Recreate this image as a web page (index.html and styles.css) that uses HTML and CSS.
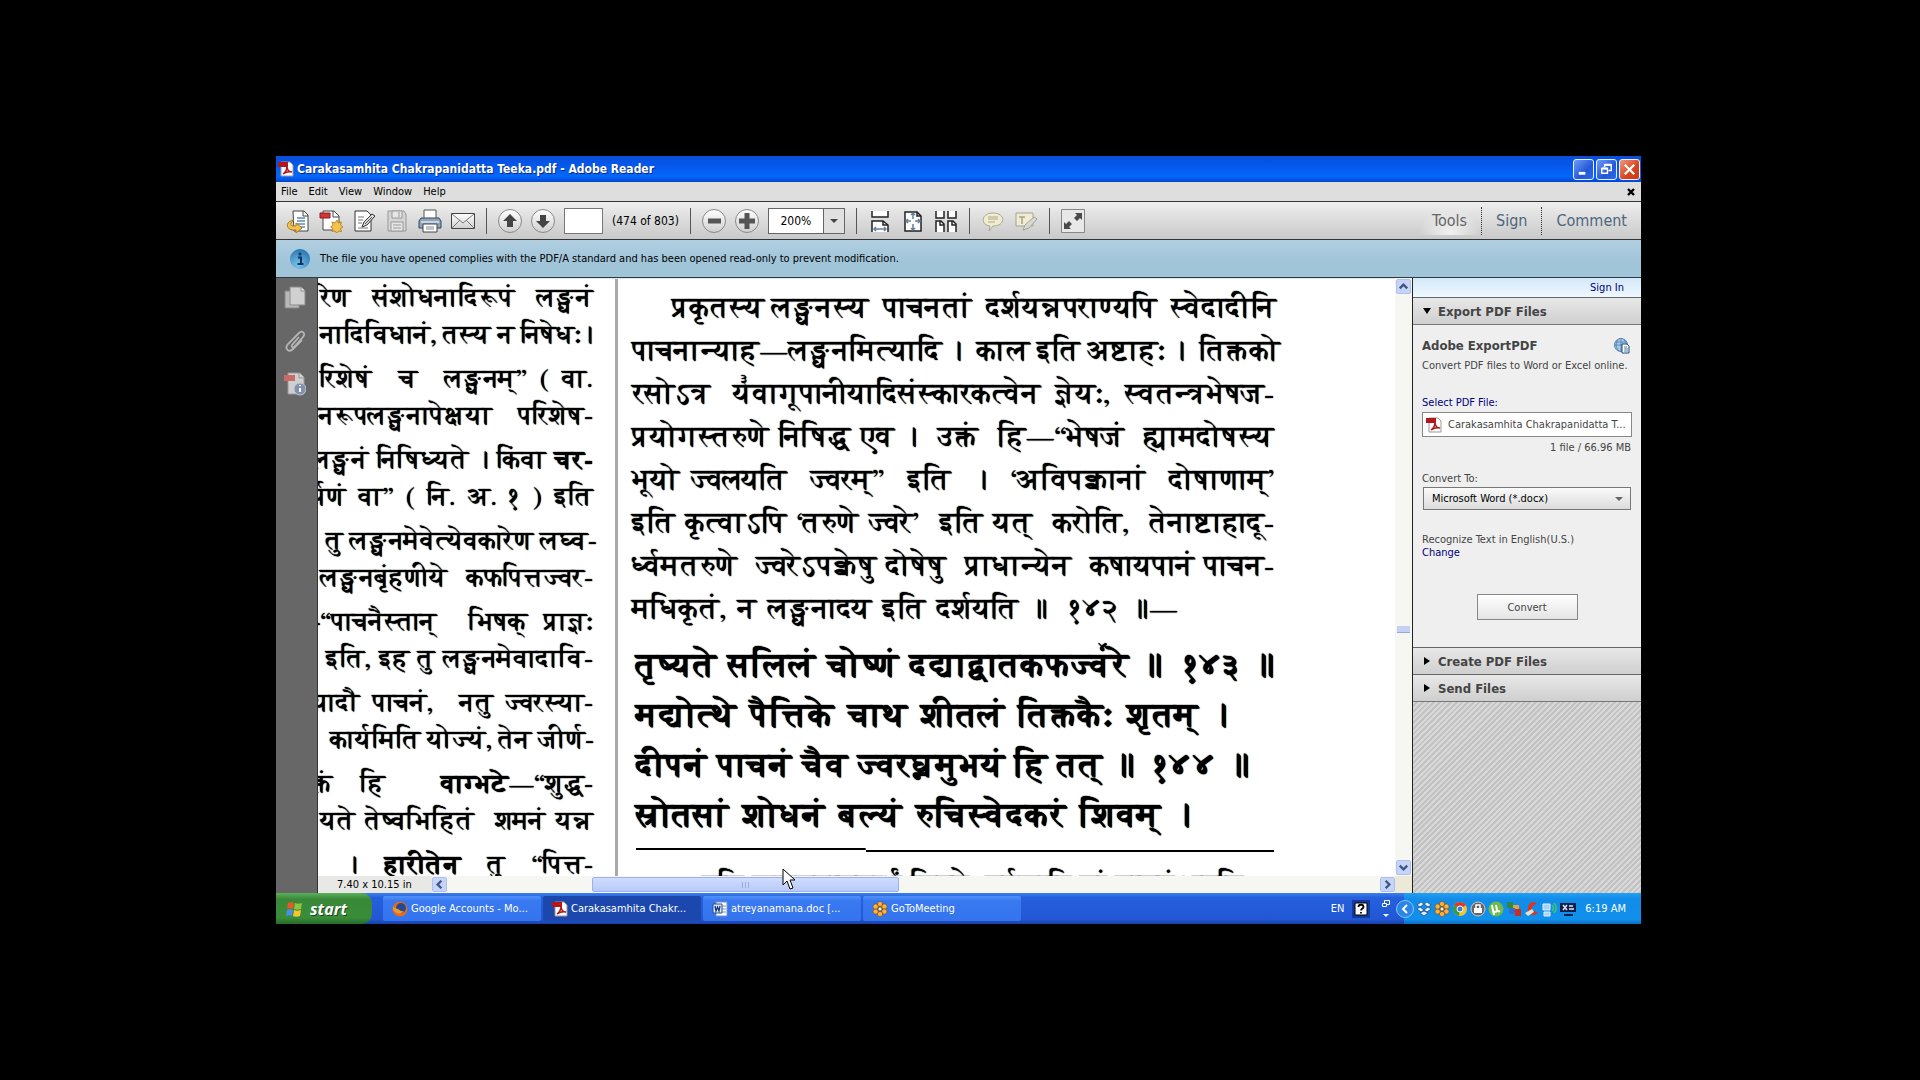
FILE: index.html
```html
<!DOCTYPE html>
<html lang="en">
<head>
<meta charset="utf-8">
<title>Carakasamhita Chakrapanidatta Teeka.pdf - Adobe Reader</title>
<link rel="stylesheet" href="styles.css">
</head>
<body>
<svg class="defs" aria-hidden="true">
  <linearGradient id="steel" x1="0" y1="0" x2="0" y2="1"><stop offset="0" stop-color="#fff"/><stop offset="1" stop-color="#cfcfcf"/></linearGradient>
  <radialGradient id="info" cx=".4" cy=".8" r=".9"><stop offset="0" stop-color="#7cc4ea"/><stop offset="1" stop-color="#1f6cab"/></radialGradient>
  <symbol id="pdf" viewBox="0 0 16 16"><path d="M3 1h9l3 3v11H3z" fill="#fff" stroke="#999"/><path d="M0 1h10v5H0z" fill="#b3161b"/><path d="M5 13c3-2 4-5 4-8 0 4 2 6 5 6-4-1-6 0-9 2z" fill="none" stroke="#b3161b" stroke-width="1.5"/></symbol>
  <symbol id="flower" viewBox="0 0 16 16"><g fill="#fbb040" stroke="#6b3a08" stroke-width=".5"><circle cx="8" cy="3" r="2.600"/><circle cx="12.4" cy="5.5" r="2.600"/><circle cx="12.4" cy="10.5" r="2.600"/><circle cx="8" cy="13" r="2.600"/><circle cx="3.6" cy="10.5" r="2.600"/><circle cx="3.6" cy="5.5" r="2.600"/></g><circle cx="8" cy="8" r="2" fill="#fff2c8" stroke="#6b3a08" stroke-width=".7"/></symbol>
</svg>
<div class="window">
  <header class="titlebar">
    <svg class="i16"><use href="#pdf"/></svg>
    <h1>Carakasamhita Chakrapanidatta Teeka.pdf - Adobe Reader</h1>
    <div class="winbtns">
      <button aria-label="Minimize"><svg viewBox="0 0 20 20"><path d="M5 14h7" stroke="#fff" stroke-width="3"/></svg></button>
      <button aria-label="Restore"><svg viewBox="0 0 20 20" fill="none" stroke="#fff"><path d="M8 8V5h7v6h-3" stroke-width="1.5"/><path d="M5 9h6v5H5z" stroke-width="1.5"/><path d="M5 9h6M8 5h7" stroke-width="2"/></svg></button>
      <button class="close" aria-label="Close"><svg viewBox="0 0 20 20"><path d="M5 5l10 10M15 5L5 15" stroke="#fff" stroke-width="2.4"/></svg></button>
    </div>
  </header>
  <nav class="menubar">
    <button>File</button><button>Edit</button><button>View</button><button>Window</button><button>Help</button>
    <button class="docclose" aria-label="Close document"><svg viewBox="0 0 8 8"><path d="M1 1l6 6M7 1L1 7" stroke="#000" stroke-width="2.4"/></svg></button>
  </nav>
  <div class="toolbar">
    <div class="group">
      <button aria-label="Open"><svg viewBox="0 0 24 24"><path d="M7 2h11l4 4v16H8z" fill="#fff" stroke="#444"/><path d="M17 2v5h5" fill="none" stroke="#444"/><path d="M11 9h8M11 12h8M11 15h8M13 18h6" stroke="#5b8db5" stroke-width="1.3"/><path d="M8 11C0 12-1 19 6 21h4v3l6-5-6-5v3H7c-3 0-3-3 1-6z" fill="#f4c34d" stroke="#a9781a"/></svg></button>
      <button aria-label="Create PDF"><svg viewBox="0 0 24 24"><path d="M4 2h11l5 5v14H4z" fill="#fff" stroke="#444"/><path d="M14 2v6h6" fill="none" stroke="#444"/><path d="M1 4h10v5H1z" fill="#d8323a" stroke="#8c1c22"/><path d="M18 11l1.500 3 3-1-1 3 2.500 2-2.500 1.500 1 3-3-.5-1.500 2.500-2-2.500-3 .5 1-3-2.500-1.500 2.500-2-1-3 3 1z" fill="#f4c34d" stroke="#a9781a" stroke-width=".8"/></svg></button>
      <button aria-label="Edit"><svg viewBox="0 0 24 24"><path d="M3 2h12l4 4v16H3z" fill="#fff" stroke="#333"/><path d="M6 8h6M6 11h5M6 14h4M6 19h10" stroke="#777"/><path d="M10 18l2-5 8-8 3 2-8 9z" fill="#d9dde2" stroke="#333"/><path d="M13 15l7-7" stroke="#555"/></svg></button>
      <button aria-label="Save" disabled><svg viewBox="0 0 24 24" fill="#d4d4d4" stroke="#999"><path d="M3 2h16l2 3v17H3z"/><path d="M7 2h10v7H7zM6 13h12v9H6z" fill="#e6e6e6"/><path d="M14 3v5M8 16h8M8 19h8" fill="none"/></svg></button>
      <button aria-label="Print"><svg viewBox="0 0 24 24"><path d="M6 1h12v9H6z" fill="#fff" stroke="#555"/><path d="M3 9h18l2 3v7H1v-7z" fill="#90a4bb" stroke="#34465a"/><path d="M3 13h18" stroke="#dbe5ef" stroke-width="1.500"/><path d="M5 15h14v8H5z" fill="#fff" stroke="#444"/><path d="M8 18h8M8 20h8" stroke="#888"/></svg></button>
      <button aria-label="Email"><svg viewBox="0 0 24 24"><path d="M0.500 4.500h23v15H.5z" fill="url(#steel)" stroke="#444"/><path d="M1 5l11 9L23 5M1 19l8-8M23 19l-8-8" fill="none" stroke="#777"/></svg></button>
    </div>
    <div class="group">
      <button aria-label="Previous page"><svg viewBox="0 0 24 24"><circle cx="12" cy="12" r="11.500" fill="url(#steel)" stroke="#888"/><path d="M12 5l7 7h-4v6H9v-6H5z" fill="#444"/></svg></button>
      <button aria-label="Next page"><svg viewBox="0 0 24 24"><circle cx="12" cy="12" r="11.500" fill="url(#steel)" stroke="#888"/><path d="M12 19l7-7h-4V6H9v6H5z" fill="#444"/></svg></button>
      <input class="pageno" aria-label="Page number">
      <span class="pages">(474 of 803)</span>
    </div>
    <div class="group">
      <button aria-label="Zoom out"><svg viewBox="0 0 24 24"><circle cx="12" cy="12" r="11.500" fill="url(#steel)" stroke="#888"/><path d="M6 12h13" stroke="#555" stroke-width="5"/></svg></button>
      <button aria-label="Zoom in"><svg viewBox="0 0 24 24"><circle cx="12" cy="12" r="11.500" fill="url(#steel)" stroke="#888"/><path d="M4 12h16M12 4v16" stroke="#555" stroke-width="5"/></svg></button>
      <div class="zoom"><input value="200%" aria-label="Zoom level"><button aria-label="Zoom presets"><svg viewBox="0 0 8 8"><path d="M0 2h8L4 6z" fill="#444"/></svg></button></div>
    </div>
    <div class="group">
      <button aria-label="Fit width"><svg viewBox="0 0 24 24" fill="none" stroke="#222" stroke-width="1.500"><path d="M4 2v6h16V2" fill="#fff"/><path d="M4 23V12h11l5 4v7" fill="#fff"/><path d="M15 12v4h5"/><path d="M6 20h12M8 18l-2 2 2 2M16 18l2 2-2 2" stroke="#66809c"/></svg></button>
      <button aria-label="Fit page"><svg viewBox="0 0 24 24" fill="none" stroke="#222" stroke-width="1.500"><path d="M4 3h12l4 4v15H4z" fill="#fff"/><path d="M16 3v4h4"/><path d="M12 4v6M12 15v6M5 12h5M14 12h5M10 6l2-2 2 2M10 19l2 2 2-2M7 10l-2 2 2 2M17 10l2 2-2 2" stroke="#66809c"/></svg></button>
      <button aria-label="Two pages"><svg viewBox="0 0 24 24" fill="none" stroke="#222" stroke-width="1.500"><path d="M2 2v7h8V2M14 2v7h8V2" fill="#fff"/><path d="M2 23V12h5l3 3v8M14 23V12h5l3 3v8" fill="#fff"/><path d="M6 12v4h4M18 12v4h4"/></svg></button>
    </div>
    <div class="group">
      <button aria-label="Comment" disabled><svg viewBox="0 0 24 24" fill="#efecd2" stroke="#aba98c"><path d="M12 4c13 0 13 13 0 13l-4 5 1-5C-1 16 0 4 12 4z"/><path d="M7 8h10M7 10h10M7 13h7"/></svg></button>
      <button aria-label="Highlight" disabled><svg viewBox="0 0 24 24" fill="#efecd2" stroke="#a5a490"><path d="M2 4h17v13H2z"/><path d="M5 8h6M8 8v7" stroke-width="1.500"/><path d="M9 21l2-5 9-8 3 2-8 9z" fill="#d8d8d4"/></svg></button>
    </div>
    <div class="group">
      <button aria-label="Read mode"><svg viewBox="0 0 24 24"><path d="M.5.5h23v23H.5z" fill="#e8e8e8" stroke="#888"/><path d="M14 4h7v7l-2-2-3 3-3-3 3-3zM3 20v-7l2 2 3-3 3 3-3 3 2 2z" fill="#4a4a4a"/></svg></button>
    </div>
    <div class="tasks"><button class="on">Tools</button><button>Sign</button><button>Comment</button></div>
  </div>
  <div class="notice">
    <svg viewBox="0 0 20 20"><circle cx="10" cy="10" r="10" fill="url(#info)"/><path d="M8 8.500h3V15M7.500 15h6" stroke="#0d3761" stroke-width="2" fill="none"/><circle cx="10" cy="5" r="1.600" fill="#0d3761"/></svg>
    <span>The file you have opened complies with the PDF/A standard and has been opened read-only to prevent modification.</span>
  </div>
  <main>
    <nav class="strip">
      <button aria-label="Thumbnails"><svg viewBox="0 0 22 24"><path d="M1 5h14v17H1z" fill="#b9b9b9" stroke="#888"/><path d="M6 1h11l4 4v14H6z" fill="#d0d0d0" stroke="#8a8a8a"/><path d="M17 1v4h4" fill="#eee" stroke="#8a8a8a"/></svg></button>
      <button aria-label="Attachments"><svg viewBox="0 0 22 24" fill="none" stroke="#b5b5b5" stroke-width="1.800"><path d="M15 8L8 16c-1 2 1 3 2 2l9-10c3-4-1-7-4-4L4 15c-4 5 1 9 5 5l9-9"/></svg></button>
      <button aria-label="Standards"><svg viewBox="0 0 22 24"><path d="M4 1h12l4 4v17H4z" fill="#cfcfcf" stroke="#999"/><path d="M15 1v5h5" fill="none" stroke="#999"/><path d="M0 3h11v6H0z" fill="#c96a6a"/><circle cx="16" cy="17" r="6" fill="#8490b0" stroke="#c4c8d4"/><path d="M16 16v4M16 13v1" stroke="#fff" stroke-width="2"/></svg></button>
    </nav>
    <section class="doc">
      <div class="pages-view" lang="sa">
        <article class="page left">
          <p>रेण&nbsp; संशोधनादिरूपं&nbsp; लङ्घनं</p>
          <p>नादिविधानं, तस्य न निषेधः।</p>
          <p>रिशेषं&nbsp; च&nbsp; लङ्घनम्’’ ( वा.</p>
          <p class="cut2">मानरूपलङ्घनापेक्षया&nbsp; परिशेष-</p>
          <p class="cut">लङ्घनं निषिध्यते । किंवा <b>चर-</b></p>
          <p class="cut">र्पणं वा’’ ( नि. अ. १ ) इति</p>
          <p class="in">तु लङ्घनमेवेत्येवकारेण लघ्व-</p>
          <p>लङ्घनबृंहणीये&nbsp; कफपित्तज्वर-</p>
          <p class="cut">-‘‘पाचनैस्तान्&nbsp; भिषक् प्राज्ञः</p>
          <p class="in">इति, इह तु लङ्घनमेवादावि-</p>
          <p class="cut">यादौ पाचनं,&nbsp; नतु ज्वरस्या-</p>
          <p class="in2">कार्यमिति योज्यं, तेन जीर्ण-</p>
          <p class="cut">क्तं हि&nbsp; <b>वाग्भटे</b>—‘‘शुद्ध-</p>
          <p>यते तेष्वभिहितं&nbsp; शमनं यन्न</p>
          <p class="in3">।&nbsp; <b>हारीतेन</b>&nbsp; तु&nbsp; ‘‘पित्त-</p>
        </article>
        <article class="page right">
          <p class="ind">प्रकृतस्य लङ्घनस्य&nbsp; पाचनतां&nbsp; दर्शयन्नपराण्यपि&nbsp; स्वेदादीनि</p>
          <p>पाचनान्याह—लङ्घनमित्यादि ।&nbsp; काल इति अष्टाहः ।&nbsp; तिक्तको</p>
          <p>रसोऽत्र&nbsp;&nbsp; <span class="noted">य<sup>३</sup></span>वागूपानीयादिसंस्कारकत्वेन&nbsp; ज्ञेयः,&nbsp; स्वतन्त्रभेषज-</p>
          <p>प्रयोगस्तरुणे निषिद्ध एव ।&nbsp; उक्तं&nbsp; हि—‘‘भेषजं&nbsp; ह्यामदोषस्य</p>
          <p>भूयो ज्वलयति&nbsp; ज्वरम्’’&nbsp; इति&nbsp; ।&nbsp; ‘अविपक्वानां&nbsp; दोषाणाम्’</p>
          <p>इति कृत्वाऽपि ‘तरुणे ज्वरे’&nbsp; इति यत्&nbsp; करोति,&nbsp; तेनाष्टाहादू-</p>
          <p>र्ध्वमतरुणे&nbsp; ज्वरेऽपक्वेषु दोषेषु&nbsp; प्राधान्येन&nbsp; कषायपानं पाचन-</p>
          <p class="end">मधिकृतं, न लङ्घनादय इति दर्शयति ॥&nbsp; १४२ ॥—</p>
          <div class="verse">
            <p>तृष्यते सलिलं चोष्णं दद्याद्वातकफज्<span class="noted">व<sup>४</sup></span>रे ॥&nbsp; १४३ ॥</p>
            <p class="v2">मद्योत्थे पैत्तिके चाथ शीतलं तिक्तकैः शृतम् ।</p>
            <p class="v3">दीपनं पाचनं चैव ज्वरघ्नमुभयं हि तत् ॥&nbsp; १४४ ॥</p>
            <p class="v4">स्रोतसां शोधनं बल्यं रुचिस्वेदकरं शिवम् ।</p>
          </div>
          <hr>
          <p class="next">इति लङ्घनपाचनार्थं विषये&nbsp; तर्पणादि नां पाचनं भवति</p>
        </article>
      </div>
      <div class="vscroll">
        <button aria-label="Scroll up"><svg viewBox="0 0 14 14"><path d="M3 9l4-4 4 4" fill="none" stroke="#3f5580" stroke-width="2.500"/></svg></button>
        <span class="vthumb"></span>
        <button aria-label="Scroll down"><svg viewBox="0 0 14 14"><path d="M3 5l4 4 4-4" fill="none" stroke="#3f5580" stroke-width="2.500"/></svg></button>
      </div>
      <div class="hscroll">
        <span class="size">7.40 x 10.15 in</span>
        <button aria-label="Scroll left"><svg viewBox="0 0 14 14"><path d="M9 3L5 7l4 4" fill="none" stroke="#3f5580" stroke-width="2.500"/></svg></button>
        <div class="track"><span class="hthumb"></span></div>
        <button aria-label="Scroll right"><svg viewBox="0 0 14 14"><path d="M5 3l4 4-4 4" fill="none" stroke="#3f5580" stroke-width="2.500"/></svg></button>
      </div>
      <div class="corner"></div>
      <svg class="cursor" viewBox="0 0 14 22"><path d="M1 1v16l4-4 3 8 3-1-3-8h5z" fill="#fff" stroke="#000"/></svg>
    </section>
    <aside class="panel">
      <div class="signin"><a href="#">Sign In</a></div>
      <h2><svg viewBox="0 0 8 8"><path d="M0 1h8L4 7z"/></svg>Export PDF Files</h2>
      <div class="export">
        <div class="prod"><h3>Adobe ExportPDF</h3><svg viewBox="0 0 16 16"><circle cx="7" cy="7" r="6.500" fill="#a9c9e6" stroke="#4c7fae"/><path d="M7 1v12M1 7h12M2 4h10M4 2c-3 4-2 8 1 11M10 2c3 3 3 6 2 8" fill="none" stroke="#4c7fae" stroke-width=".8"/><path d="M8 6h5l2 2v7H8z" fill="#fff" stroke="#234a72"/><path d="M10 9h3M10 11h4M10 13h4" stroke="#4c7fae"/></svg></div>
        <p class="blurb">Convert PDF files to Word or Excel online.</p>
        <p class="pick"><a href="#">Select PDF File:</a></p>
        <div class="file"><svg class="i16"><use href="#pdf"/></svg>Carakasamhita Chakrapanidatta T...</div>
        <p class="count">1 file / 66.96 MB</p>
        <label for="fmt">Convert To:</label>
        <div class="sel"><select id="fmt"><option>Microsoft Word (*.docx)</option></select><svg viewBox="0 0 8 8"><path d="M0 2h8L4 6z" fill="#666"/></svg></div>
        <p class="rec">Recognize Text in English(U.S.)</p>
        <p class="chg"><a href="#">Change</a></p>
        <button class="convert">Convert</button>
      </div>
      <h2><svg viewBox="0 0 8 8"><path d="M1 0v8l6-4z"/></svg>Create PDF Files</h2>
      <h2><svg viewBox="0 0 8 8"><path d="M1 0v8l6-4z"/></svg>Send Files</h2>
      <div class="hatch"></div>
    </aside>
  </main>
  <footer class="taskbar">
    <button class="start"><svg viewBox="0 0 18 18"><path d="M2 3c2-1 4-1 6 0L7 9C5 8 3 8 1 9z" fill="#e8562a"/><path d="M9 3c2 1 4 1 7 0l-1 6c-3 1-5 1-7 0z" fill="#8cc63f"/><path d="M1 10c2-1 4-1 6 0l-1 6c-2-1-4-1-6 0z" fill="#4a8fe8"/><path d="M8 10c2 1 4 1 7 0l-1 6c-3 1-5 1-7 0z" fill="#f9c52b"/></svg>start</button>
    <button class="task"><svg class="i16" viewBox="0 0 16 16"><circle cx="8" cy="8" r="7.500" fill="#e66a1e"/><circle cx="9" cy="7" r="5" fill="#264a8f"/><path d="M1 5c1 3 3 2 5 3s3 3 6 2c-3 4-9 3-11-2z" fill="#f39a2c"/></svg>Google Accounts - Mo...</button>
    <button class="task active"><svg class="i16"><use href="#pdf"/></svg>Carakasamhita Chakr...</button>
    <button class="task"><svg class="i16" viewBox="0 0 16 16"><path d="M4 1h11v14H4z" fill="#fff" stroke="#7d94c0"/><path d="M10 5h4M10 8h4M10 11h4" stroke="#7d94c0"/><path d="M1 3h9v9H1z" fill="#dfe8fa" stroke="#2b4f93"/><path d="M3 5l1 5 1.500-4L7 10l1-5" fill="none" stroke="#17367a" stroke-width="1.300"/></svg>atreyanamana.doc [...</button>
    <button class="task"><svg class="i16"><use href="#flower"/></svg>GoToMeeting</button>
    <div class="lang"><span>EN</span>
      <svg viewBox="0 0 18 18"><path d="M0 0h18v18H0z" fill="#123a9c"/><path d="M3 3h12v12H3z" fill="#fff" stroke="#000"/><path d="M6.500 7c0-3 5-3 5 0 0 1.500-2.500 1.500-2.500 3.500M9 12v1.500" fill="none" stroke="#000" stroke-width="1.800"/></svg>
      <svg class="mini" viewBox="0 0 8 18" fill="none" stroke="#fff"><path d="M2.500 3V.5h5v4H5M.5 3.500h4v3h-4z"/><path d="M1 14h6l-3 3z" fill="#fff" stroke="none"/></svg>
    </div>
    <div class="tray">
      <button class="chev" aria-label="Show icons"><svg viewBox="0 0 18 18"><circle cx="9" cy="9" r="8.500" fill="#2a86e8" stroke="#8cc4f8"/><path d="M11 5L7 9l4 4" fill="none" stroke="#fff" stroke-width="2"/></svg></button>
      <div class="icons">
      <svg viewBox="0 0 16 16"><path d="M5 1l3 2-4 3-3-2zM11 1l4 3-3 2-4-3zM1 8l3-2 4 3-3 2zM12 6l3 2-4 3-3-2zM4 12l4-2 4 2-4 3z" fill="#e4f2ff" stroke="#16407c" stroke-width=".7"/></svg>
      <svg><use href="#flower"/></svg>
      <svg viewBox="0 0 16 16"><circle cx="8" cy="8" r="7" fill="#f3c62f"/><path d="M8 8L2 4c3-4 9-4 12 0z" fill="#d93a2b"/><path d="M8 8L2 4c-3 5 0 10 5 11z" fill="#3a9b4a"/><circle cx="8" cy="8" r="3" fill="#3c79d8" stroke="#fff"/></svg>
      <svg viewBox="0 0 16 16"><circle cx="8" cy="8" r="7" fill="#666" stroke="#ccc"/><path d="M4 7h8v5H4z" fill="#fff"/><path d="M6 7V4h4v3" fill="none" stroke="#fff" stroke-width="1.500"/></svg>
      <svg viewBox="0 0 16 16"><circle cx="8" cy="8" r="7.500" fill="#6dbb4a"/><path d="M4 4l1 6c3 2 4 0 4-1l-1-5M9 9c1 2 3 1 3 1M5 9l1 5" fill="none" stroke="#fff" stroke-width="2"/></svg>
      <svg viewBox="0 0 16 16"><path d="M1 1h6v6H1z" fill="#2e8a3c"/><path d="M7 4h6v5H7z" fill="#e4a43a"/><path d="M3 7h6v6H3z" fill="#2f6fd0"/><path d="M9 8h6v7H9z" fill="#c53022"/></svg>
      <svg viewBox="0 0 16 16"><path d="M13 2C7-1 3 4 4 9s6 7 10 3l-3-2c-3 2-4-3-2-5z" fill="#d5352a"/><path d="M1 12l7-4 2 3-6 4z" fill="#e8e1c8"/></svg>
      <svg viewBox="0 0 16 16"><path d="M1 3h7v6H1zM2 11h6v4H2z" fill="#a5d0ff" stroke="#e6f2ff"/><path d="M10 4c2 2 2 4 0 6M12 2c3 3 3 7 0 10" fill="none" stroke="#42c96a" stroke-width="1.500"/></svg>
      <svg viewBox="0 0 16 16"><path d="M0 2h16v9H0zM4 13h9v2H4z" fill="#10204a"/><path d="M3 4l4 5M7 4L3 9M9 5h4M9 8h5" stroke="#dfe6f4" stroke-width="1.500"/></svg>
      </div>
      <time>6:19 AM</time>
    </div>
  </footer>
</div>
</body>
</html>
```
FILE: styles.css
```css
* { box-sizing: border-box; }
html, body { height: 100%; }
body {
  margin: 0; background: #000; color: #000; display: flex; flex-direction: column;
  padding: 156px 279px 156px 276px;
  font: 11px "DejaVu Sans Condensed", "DejaVu Sans", sans-serif;
}
h1, h2, h3, p { margin: 0; }
button { border: 0; padding: 0; background: none; font: inherit; color: inherit; }
input, select { font: inherit; }
a { color: #000080; text-decoration: none; }
svg { display: block; flex: none; }
.defs { position: absolute; width: 0; height: 0; }
.i16 { width: 16px; height: 16px; }
.window { flex: 1; min-height: 0; display: flex; flex-direction: column; background: #dedede; }

.titlebar { display: flex; align-items: center; gap: 3px; flex: none; height: 26px; padding: 0 1px 0 2px; background: linear-gradient(#0a4fd8, #0456e8 30%, #0468fc 80%, #0444cc); }
.titlebar h1 { flex: 1; font-size: 12px; color: #fff; text-shadow: 1px 1px #0a2a80; }
.winbtns { display: flex; gap: 2px; }
.winbtns button { width: 21px; height: 21px; border: 1px solid #e8f0ff; border-radius: 3px; background: linear-gradient(135deg, #6f9cf4, #2358d8 60%, #2a6ae8); }
.winbtns .close { background: linear-gradient(135deg, #f0987c, #d8431c 60%, #c83a14); }
.winbtns svg { width: 19px; height: 19px; }

.menubar { display: flex; align-items: center; gap: 11px; flex: none; height: 20px; padding: 0 6px 0 5px; border-bottom: 1px solid #333; }
.docclose { margin-left: auto; }
.docclose svg { width: 8px; height: 8px; }

.toolbar { display: flex; align-items: center; flex: none; height: 38px; padding-left: 10px; border-bottom: 1px solid #333; background: linear-gradient(#eee, #c9c9c9); }
.group { display: flex; align-items: center; gap: 9px; padding-right: 11px; margin-right: 11px; border-right: 1px solid #555; height: 26px; }
.group > button > svg { width: 24px; height: 24px; }
.group:nth-child(6) { border: 0; }
.pageno { width: 39px; height: 26px; border: 1px solid #777; background: #fff; }
.pages { font-size: 12px; }
.zoom { display: flex; height: 26px; width: 77px; border: 1px solid #666; background: #fff; }
.zoom input { width: 54px; border: 0; padding: 0; text-align: center; font-size: 12px; background: none; }
.zoom button { flex: 1; border-left: 1px solid #666; background: #e0e0e0; display: flex; align-items: center; justify-content: center; }
.zoom svg { width: 8px; height: 8px; }
.tasks { margin-left: auto; display: flex; font-size: 16px; color: #4f6580; }
.tasks button { padding: 0 14px; height: 28px; }
.tasks button + button { border-left: 1px dotted #333; }
.tasks .on { color: #666; background: radial-gradient(ellipse at bottom, #f2f2f2, transparent 70%); }

.notice { display: flex; align-items: center; gap: 10px; flex: none; height: 38px; padding-left: 14px; border-bottom: 1px solid #2c3a44; background: linear-gradient(#b2cfe2, #a0c4d8 60%); }
.notice svg { width: 20px; height: 20px; }

main { flex: 1; display: flex; min-height: 0; }
.strip { width: 42px; flex: none; background: #676767; border-right: 1px solid #333; display: flex; flex-direction: column; gap: 19px; padding: 8px 8px; }
.strip svg { width: 22px; height: 24px; }

.doc { flex: 1; min-width: 0; display: grid; grid-template: minmax(0, 1fr) 17px / minmax(0, 1fr) 17px; position: relative; background: #fff; }
.pages-view { display: flex; overflow: hidden; min-height: 0; border-top: 1px solid #e4e4e4; font-family: FreeSerif, "Noto Sans", serif; text-shadow: 0 0 1px #000, 0 0 1px #000; white-space: nowrap; }
.page p { text-align-last: justify; }
.left { flex: none; width: 300px; padding: 1px 22px 0 2px; font-size: 26px; overflow: hidden; border-right: 3px solid #aaa; }
.left p { line-height: 37px; height: 37px; }
.left p:nth-child(even) { margin-bottom: 7px; }
.left .cut { margin-left: -8px; }
.left .cut2 { margin-left: -24px; }
.left .in { margin-left: 6px; }
.left .in2 { margin-left: 10px; }
.left .in3 { margin-left: 26px; }
.right { width: 656px; flex: none; padding: 8px 0 0 14px; font-size: 29px; }
.right p { line-height: 43px; height: 43px; }
.right .ind { margin-left: 40px; }
.right .end { margin-right: 96px; }
.noted { position: relative; }
.noted sup { position: absolute; top: -8px; left: 8px; font-size: 14px; line-height: 14px; }
.verse { font-size: 34px; font-weight: bold; padding: 10px 0 0 4px; }
.right .verse p { line-height: 50px; height: 50px; }
.right .verse .v2 { margin-right: 47px; }
.right .verse .v3 { margin-right: 25px; }
.right .verse .v4 { margin-right: 84px; }
.right hr { height: 4px; margin: 7px 0 12px 4px; border: 0; background: linear-gradient(#000, #000) left top / 36% 2px no-repeat, linear-gradient(#000, #000) right bottom / 64% 2px no-repeat; }
.right .next { margin: 0 40px 0 70px; }

.vscroll { display: flex; flex-direction: column; align-items: center; justify-content: space-between; padding: 1px; background: #f6f6f2; }
.vscroll button, .hscroll button { width: 15px; height: 15px; border-radius: 2px; background: #c6d4fa; border: 1px solid #b0c0ec; flex: none; }
.vscroll svg, .hscroll svg { width: 13px; height: 13px; }
.vthumb { width: 13px; height: 7px; background: #c6d0f4; border-bottom: 1px solid #9aa8d8; margin-top: 105px; }
.hscroll { display: flex; align-items: center; background: #f6f6f2; }
.size { width: 114px; height: 17px; padding-left: 19px; line-height: 17px; background: #e8e8e6; }
.track { flex: 1; height: 17px; padding: 1px 0; }
.hthumb { display: block; height: 15px; width: 33%; margin-left: 15.5%; border-radius: 2px; border: 1px solid #9cb2ec; background: repeating-linear-gradient(90deg, #98aee4 0 1px, transparent 1px 3px) center / 7px 6px no-repeat, linear-gradient(#d0dcff, #b8caf8); }
.corner { background: #ece9d8; }
.cursor { position: absolute; left: 464px; top: 590px; width: 14px; height: 22px; }

.panel { width: 229px; flex: none; display: flex; flex-direction: column; border-left: 1px solid #222; background: #efefef; color: #444; }
.signin { height: 19px; line-height: 19px; padding-right: 17px; text-align: right; background: linear-gradient(#d4e8f8, #eef8ff); }
.panel h2 { display: flex; align-items: center; gap: 7px; height: 27px; padding-left: 10px; font-size: 13px; border-top: 1px solid #666; background: linear-gradient(#e8e8e8, #cfcfcf); }
.panel h2 svg { width: 8px; height: 8px; }
.export { padding: 13px 9px 0; height: 323px; border-top: 1px solid #777; }
.prod { display: flex; justify-content: space-between; height: 16px; padding-right: 2px; }
.prod h3 { font-size: 13px; line-height: 16px; }
.prod svg { width: 16px; height: 16px; }
.blurb { margin-top: 2px; line-height: 20px; white-space: nowrap; }
.pick { margin-top: 18px; line-height: 18px; }
.file { display: flex; align-items: center; gap: 6px; height: 25px; padding-left: 3px; border: 1px solid #888; background: #fff; white-space: nowrap; overflow: hidden; }
.count { text-align: right; line-height: 22px; padding-right: 1px; }
.export label { display: block; margin-top: 11px; line-height: 17px; }
.sel { position: relative; margin: 0 1px; }
.sel select { appearance: none; width: 100%; height: 23px; padding: 0 8px; border: 1px solid #777; border-radius: 0; color: #000; background: linear-gradient(#fafafa, #dcdcdc); }
.sel svg { position: absolute; right: 8px; top: 8px; width: 8px; height: 8px; }
.rec { margin-top: 23px; line-height: 14px; }
.chg { line-height: 12px; }
.convert { display: block; width: 101px; height: 26px; margin: 35px auto 0; border: 1px solid #888; background: linear-gradient(#fff, #e4e4e4); }
.hatch { flex: 1; border-top: 1px solid #777; background: repeating-linear-gradient(135deg, #d8d8d8 0 2px, #c2c2c2 2px 4px); }

.taskbar { display: flex; align-items: center; flex: none; height: 31px; color: #fff; background: linear-gradient(#3a80f0, #2560dc 15%, #2257d4 85%, #1840a8); }
.start { display: flex; align-items: center; gap: 6px; width: 96px; height: 100%; margin-right: 11px; padding-left: 10px; border-radius: 0 10px 10px 0; background: linear-gradient(#5cb05c, #388838 20%, #3a8c3a 80%, #256a28); font: italic bold 16px "Open Sans", sans-serif; text-shadow: 1px 1px #1c4c1c; }
.start svg { width: 18px; height: 18px; }
.task { display: flex; align-items: center; gap: 3px; width: 158px; height: 25px; margin-right: 2px; padding-left: 9px; border-radius: 2px; white-space: nowrap; background: linear-gradient(#5090fc, #3878f0 20%, #3474ec); }
.task.active { background: #1c48ae; }
.lang { margin-left: auto; display: flex; align-items: center; gap: 8px; }
.lang svg { width: 18px; height: 18px; }
.lang .mini { width: 8px; margin: 0 14px 0 4px; }
.tray { display: flex; align-items: center; height: 100%; padding-right: 15px; background: linear-gradient(#20a0f4, #128ce8 20%, #1090ec 85%, #0c6cc0); }
.chev { margin-left: -8px; }
.chev svg { width: 18px; height: 18px; }
.icons { display: flex; gap: 2px; margin: 0 9px 0 2px; }
.icons svg { width: 16px; height: 16px; }
```
